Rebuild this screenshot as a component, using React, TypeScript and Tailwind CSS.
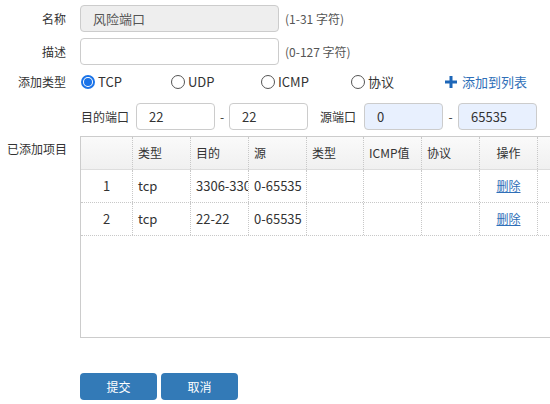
import React from "react";

const font = { fontFamily: '"Microsoft YaHei", "Noto Sans CJK SC", "Noto Sans", sans-serif' };

function Radio({ checked, label }: { checked?: boolean; label: string }) {
  return (
    <div className="flex items-center w-[90px] h-[18px]">
      {checked ? (
        <span className="w-[14px] h-[14px] rounded-full border-2 border-[#1a73e8] flex items-center justify-center bg-white">
          <span className="w-[8px] h-[8px] rounded-full bg-[#1a73e8]" />
        </span>
      ) : (
        <span className="w-[14px] h-[14px] rounded-full border border-[#555] bg-white" />
      )}
      <span className="ml-[3px] text-[13px] text-[#333]">{label}</span>
    </div>
  );
}

const cols = [52, 58, 58, 58, 57, 58, 58, 58, 60];

function Cell({ w, children, center, last }: { w: number; children?: React.ReactNode; center?: boolean; last?: boolean }) {
  return (
    <div
      style={{ width: w }}
      className={`h-full flex items-center shrink-0 overflow-hidden ${center ? "justify-center" : "pl-[5px]"} ${last ? "" : "border-r border-dotted border-[#c8c8c8]"}`}
    >
      {children}
    </div>
  );
}

export default function App() {
  const header = ["", "类型", "目的", "源", "类型", "ICMP值", "协议", "操作", ""];
  const rows = [
    ["1", "tcp", "3306-3306", "0-65535"],
    ["2", "tcp", "22-22", "0-65535"],
  ];
  return (
    <div className="w-[550px] h-[404px] overflow-hidden bg-white text-[12px] text-[#333]" style={font}>
      <div className="pt-[5px]">
        {/* name */}
        <div className="flex items-center h-[27px]">
          <div className="w-[66px] text-right shrink-0">名称</div>
          <div className="ml-[14px] w-[199px] h-[27px] rounded-[4px] border border-[#ccc] bg-[#eee] flex items-center pl-[12px] text-[#555] text-[13px]">风险端口</div>
          <div className="ml-[6px] text-[#555]">(1-31 字符)</div>
        </div>
        {/* desc */}
        <div className="flex items-center h-[27px] mt-[6px]">
          <div className="w-[66px] text-right shrink-0">描述</div>
          <div className="ml-[14px] w-[199px] h-[27px] rounded-[4px] border border-[#ccc] bg-white" />
          <div className="ml-[6px] text-[#555]">(0-127 字符)</div>
        </div>
        {/* type */}
        <div className="flex items-center h-[18px] mt-[8px]">
          <div className="w-[66px] text-right shrink-0">添加类型</div>
          <div className="ml-[15px] flex items-center">
            <Radio checked label="TCP" />
            <Radio label="UDP" />
            <Radio label="ICMP" />
            <Radio label="协议" />
            <div className="ml-[4px] flex items-center text-[#2f6fb8] text-[13px]">
              <svg width="12" height="12" viewBox="0 0 12 12" className="mr-[5px]">
                <rect x="4.5" y="0" width="3" height="12" fill="#1d66b8" />
                <rect x="0" y="4.5" width="12" height="3" fill="#1d66b8" />
              </svg>
              <span>添加到列表</span>
            </div>
          </div>
        </div>
        {/* ports */}
        <div className="flex items-center h-[27px] mt-[12px]">
          <div className="ml-[81px] w-[55px] shrink-0">目的端口</div>
          <div className="w-[79px] h-[27px] rounded-[4px] border border-[#ccc] bg-white flex items-center pl-[12px] text-[13px]">22</div>
          <div className="w-[14px] text-center">-</div>
          <div className="w-[79px] h-[27px] rounded-[4px] border border-[#ccc] bg-white flex items-center pl-[12px] text-[13px]">22</div>
          <div className="ml-[12px] w-[44px] shrink-0">源端口</div>
          <div className="w-[79px] h-[27px] rounded-[4px] border border-[#ccc] bg-[#e8f0fe] flex items-center pl-[12px] text-[13px]">0</div>
          <div className="w-[15px] text-center">-</div>
          <div className="w-[79px] h-[27px] rounded-[4px] border border-[#ccc] bg-[#e8f0fe] flex items-center pl-[12px] text-[13px]">65535</div>
        </div>
        {/* table */}
        <div className="flex mt-[6px]">
          <div className="w-[80px] shrink-0 pl-[7px] pt-[4px] whitespace-nowrap">已添加项目</div>
          <div className="w-[490px] h-[202px] border border-[#ccc] shrink-0">
            <div className="flex h-[33px] border-b border-[#ddd]" style={{ background: "linear-gradient(#fafafa, #f0f0f0)" }}>
              {header.map((h, i) => (
                <Cell key={i} w={cols[i]} center={i === 7} last={i === 8}>
                  {h}
                </Cell>
              ))}
            </div>
            {rows.map((r, ri) => (
              <div key={ri} className="flex h-[33px] border-b border-dotted border-[#c8c8c8] text-[13px]">
                <Cell w={cols[0]} center>{r[0]}</Cell>
                <Cell w={cols[1]}>{r[1]}</Cell>
                <Cell w={cols[2]}><span className="whitespace-nowrap">{r[2]}</span></Cell>
                <Cell w={cols[3]}>{r[3]}</Cell>
                <Cell w={cols[4]} />
                <Cell w={cols[5]} />
                <Cell w={cols[6]} />
                <Cell w={cols[7]} center>
                  <span className="text-[#2f6fb8] underline text-[12px]">删除</span>
                </Cell>
                <Cell w={cols[8]} last />
              </div>
            ))}
          </div>
        </div>
        {/* buttons */}
        <div className="flex ml-[80px] mt-[35px] gap-[4px]">
          <button className="w-[77px] h-[27px] rounded-[4px] bg-[#337ab7] text-white text-[12px]">提交</button>
          <button className="w-[77px] h-[27px] rounded-[4px] bg-[#337ab7] text-white text-[12px]">取消</button>
        </div>
      </div>
    </div>
  );
}
